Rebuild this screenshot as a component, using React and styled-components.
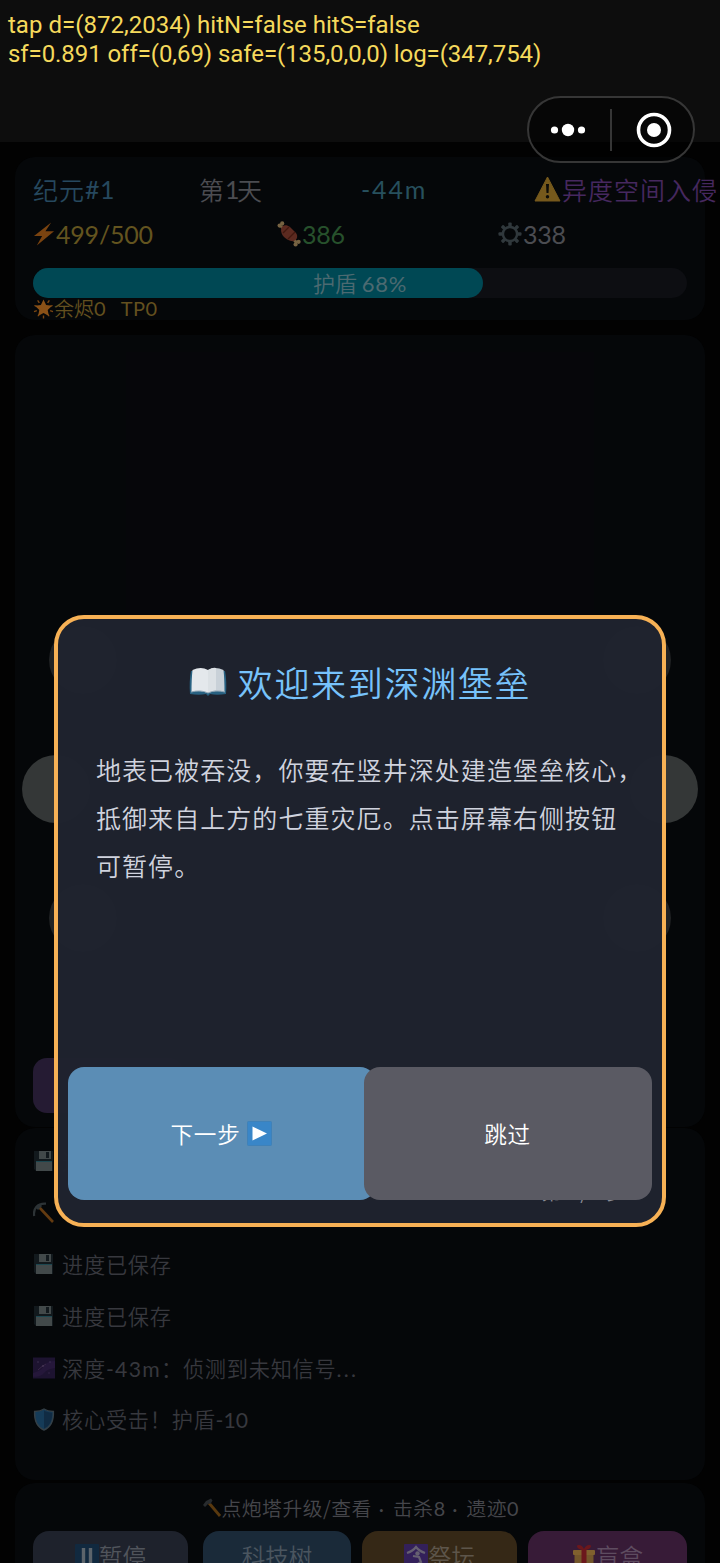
import React from "react";
import styled, { createGlobalStyle } from "styled-components";

const GlobalStyle = createGlobalStyle`
  * {
    box-sizing: border-box;
  }
  body {
    margin: 0;
    background: #020202;
    font-family: "Noto Sans CJK SC", sans-serif;
    font-weight: 350;
  }
`;

const Screen = styled.div`
  position: relative;
  display: flex;
  flex-direction: column;
  width: 720px;
  height: 1563px;
  overflow: hidden;
  background: #020202;
`;

const TopBar = styled.header`
  flex: none;
  height: 142px;
  padding: 11px 8px;
  background: #0d0d0d;
`;

const DebugLine = styled.div`
  height: 29px;
  line-height: 29px;
  font-family: Roboto, sans-serif;
  font-size: 24px;
  font-weight: 400;
  letter-spacing: ${(p) => p.$spacing};
  white-space: nowrap;
  color: #f5d95c;
`;

const Capsule = styled.div`
  position: absolute;
  top: 96px;
  left: 527px;
  z-index: 3;
  display: flex;
  align-items: center;
  width: 168px;
  height: 67px;
  border: 2px solid #363636;
  border-radius: 34px;
  background: rgba(0, 0, 0, 0.5);
`;

const CapsuleHalf = styled.div`
  display: flex;
  justify-content: center;
  width: 81px;
  padding: ${(p) => p.$pad || "0"};
`;

const CapsuleDivider = styled.div`
  width: 2px;
  height: 42px;
  background: #363636;
`;

const Panel = styled.section`
  flex: none;
  margin: 0 15px;
  height: ${(p) => p.$height};
  border-radius: 20px;
  background: #050709;
`;

const StatusPanel = styled(Panel)`
  margin-top: 15px;
  padding: 13px 18px 0;
`;

const StatRow = styled.div`
  display: grid;
  grid-template-columns: ${(p) => p.$columns};
  align-items: center;
  height: ${(p) => p.$height};
`;

const Stat = styled.div`
  display: flex;
  align-items: center;
  font-size: 25px;
  line-height: 36px;
  letter-spacing: 1px;
  white-space: nowrap;
  color: ${(p) => p.$color};

  svg {
    flex: none;
    margin-right: 1px;
  }
`;

const Num = styled.span`
  font-family: Lato, sans-serif;
  font-weight: 400;
  letter-spacing: ${(p) => p.$spacing || "0"};
`;

const ShieldTrack = styled.div`
  display: grid;
  margin-top: 7px;
  height: 30px;
  border-radius: 15px;
  background: #0d0e12;
`;

const ShieldFill = styled.div`
  grid-area: 1 / 1;
  border-radius: 15px;
  background: #004854;
`;

const ShieldLabel = styled.div`
  grid-area: 1 / 1;
  text-align: center;
  font-size: 22px;
  line-height: 28px;
  color: #4c6a71;
`;

const Embers = styled.div`
  display: flex;
  align-items: center;
  height: 21px;
  font-size: 20px;
  line-height: 21px;
  white-space: pre;
  color: #63501f;
`;

const StagePanel = styled(Panel)`
  display: flex;
  flex-direction: column;
  margin-top: 15px;
  padding-top: 17px;
`;

const Arena = styled.div`
  display: flex;
  height: 706px;
`;

const Field = styled.div`
  width: 468px;
  background: #06060a;
`;

const PadColumn = styled.div`
  display: flex;
  flex-direction: column;
  align-items: ${(p) => (p.$right ? "flex-end" : "flex-start")};
  gap: 61px;
  width: 111px;
  padding: 274px 0 0;
`;

const Pad = styled.div`
  width: 68px;
  height: 68px;
  margin: 0 ${(p) => (p.$strong ? "7px" : "34px")};
  border-radius: 50%;
  background: ${(p) => (p.$strong ? "#343737" : "#202224")};
`;

const PurpleButton = styled.div`
  width: 150px;
  height: 55px;
  margin-left: 18px;
  border-radius: 14px;
  background: #251b33;
`;

const LogPanel = styled(Panel)`
  margin-top: 1px;
  padding: 7px 18px;
`;

const LogRow = styled.div`
  display: flex;
  align-items: center;
  gap: 7px;
  height: 51.8px;
  font-size: 21.2px;
  letter-spacing: 0.75px;
  white-space: nowrap;
  color: #37383e;

  span {
    line-height: 30px;
  }
`;

const FooterPanel = styled(Panel)`
  margin-top: 3px;
  padding-top: 8px;
`;

const Hint = styled.div`
  display: flex;
  justify-content: center;
  align-items: center;
  height: 33px;
  font-size: 19.8px;
  letter-spacing: 0.5px;
  white-space: pre;
  color: #45464b;
`;

const ActionBar = styled.div`
  display: flex;
  margin-top: 7px;
  padding: 0 18px;
`;

const ActionButton = styled.div`
  display: flex;
  justify-content: center;
  align-items: center;
  width: ${(p) => p.$width};
  height: 50px;
  margin-right: ${(p) => p.$gap || "0"};
  border-radius: 16px;
  font-size: 23.5px;
  line-height: 30px;
  color: ${(p) => p.$color || "#50545b"};
  background: ${(p) => p.$bg};
`;

const Modal = styled.div`
  position: absolute;
  top: 615px;
  left: 54px;
  z-index: 2;
  display: flex;
  flex-direction: column;
  width: 612px;
  height: 612px;
  border: 4px solid #f7b155;
  border-radius: 30px;
  background: rgba(31, 35, 46, 0.97);
`;

const ModalTitle = styled.h1`
  display: flex;
  justify-content: center;
  align-items: center;
  gap: 11px;
  margin: 36px 0 0;
  height: 52px;
  font-size: 35px;
  font-weight: 350;
  letter-spacing: 1.7px;
  color: #77c2fb;

  svg {
    position: relative;
    top: 1px;
  }
`;

const ModalBody = styled.p`
  flex: 1;
  margin: 38px 10px 0 38px;
  font-size: 25px;
  font-weight: 350;
  letter-spacing: 1.06px;
  line-height: 48px;
  white-space: pre-line;
  color: #d0d3de;
`;

// sits under the buttons, only its lower edge shows
const StepLabel = styled.div`
  height: 0;
  margin-right: 34px;
  text-align: right;
  font-size: 21px;
  letter-spacing: 0.6px;
  line-height: 32px;
  color: #8a8c95;

  span {
    display: inline-block;
    transform: translateY(107px);
  }
`;

const ModalActions = styled.div`
  position: relative;
  display: flex;
  margin: 0 10px 23px;
`;

const ModalButton = styled.button`
  display: flex;
  justify-content: center;
  align-items: center;
  gap: 7px;
  width: ${(p) => p.$width};
  height: 133px;
  margin: 0 0 0 ${(p) => p.$overlap || "0"};
  padding: 0 1px 1px 0;
  border: 0;
  border-radius: 16px;
  font-family: inherit;
  font-size: 22.6px;
  font-weight: 350;
  letter-spacing: 0.7px;
  color: #fff;
  background: ${(p) => p.$bg};
`;

const Bolt = () => (
  <svg width="22" height="26" viewBox="0 0 23 26">
    <path d="M19 1 L1 15 L9.5 15 L4 25 L22 10 L13 10 Z" fill="#7a4310" />
  </svg>
);

const Meat = () => (
  <svg width="24" height="26" viewBox="0 0 24 26">
    <path d="M4 5 L20 22" stroke="#776342" strokeWidth="3" />
    <circle cx="2.6" cy="4.6" r="2.1" fill="#776342" />
    <circle cx="5.2" cy="2.4" r="2.1" fill="#776342" />
    <circle cx="18.6" cy="23.4" r="2.1" fill="#776342" />
    <circle cx="21.6" cy="20.8" r="2.1" fill="#776342" />
    <path
      d="M4 9 C4 4 9 3 13 6 L19 12 C22 16 19 21 14 20 C8 18 4 14 4 9 Z"
      fill="#5c2a20"
    />
    <path d="M6 12 L12 6 M11 18 L18 11" stroke="#41180f" strokeWidth="1.3" />
  </svg>
);

const Gear = () => (
  <svg width="24" height="24" viewBox="-12.5 -12.5 25 25">
    <circle r="7.4" fill="none" stroke="#30383c" strokeWidth="2.6" />
    {[0, 45, 90, 135, 180, 225, 270, 315].map((a) => (
      <rect
        key={a}
        x="-1.8"
        y="-12"
        width="3.6"
        height="4.5"
        rx="1"
        fill="#30383c"
        transform={`rotate(${a})`}
      />
    ))}
  </svg>
);

const Warning = () => (
  <svg width="27" height="26" viewBox="0 0 27 26">
    <path d="M13.5 1 L26 25 H1 Z" fill="#76591c" stroke="#76591c" />
    <path d="M12 8 H15 L14.5 17 H12.5 Z" fill="#0c0b08" />
    <circle cx="13.5" cy="20.7" r="1.7" fill="#0c0b08" />
  </svg>
);

const GlowStar = () => (
  <svg width="21" height="21" viewBox="-10.5 -10.5 21 21">
    {[0, 72, 144, 216, 288].map((a) => (
      <path
        key={a}
        d="M0 7 V10"
        stroke="#7c4713"
        strokeWidth="1.4"
        transform={`rotate(${a})`}
      />
    ))}
    {[36, 108, 252, 324].map((a) => (
      <path
        key={a}
        d="M0 7 V9.6"
        stroke="#7c4713"
        strokeWidth="1.2"
        transform={`rotate(${a})`}
      />
    ))}
    <path
      d="M0 -9 L2.6 -3.4 L8.6 -2.8 L4.2 1.4 L5.4 7.4 L0 4.4 L-5.4 7.4 L-4.2 1.4 L-8.6 -2.8 L-2.6 -3.4 Z"
      fill="#8a5117"
    />
  </svg>
);

const Floppy = () => (
  <svg width="22" height="22" viewBox="0 0 22 22">
    <path d="M1 1 H20 V21 H3 L1 19 Z" fill="#12191d" />
    <rect x="6" y="1" width="12" height="8" fill="#42494a" />
    <rect x="13" y="2" width="3" height="6" fill="#12191d" />
    <rect x="3" y="11" width="16" height="10" fill="#42494a" />
    <path d="M3 11.5 H19" stroke="#1c4750" />
  </svg>
);

const Pickaxe = () => (
  <svg width="22" height="22" viewBox="0 0 22 22">
    <path d="M6 5 L20 20" stroke="#643b11" strokeWidth="2.6" />
    <path
      d="M1.2 14 C0 7 4 1 13 1.6"
      fill="none"
      stroke="#2d3336"
      strokeWidth="2.2"
    />
    <path d="M4 7 L8 3" stroke="#2d3336" strokeWidth="3" />
  </svg>
);

const Galaxy = () => (
  <svg width="22" height="22" viewBox="0 0 22 22">
    <rect y="0.5" width="22" height="21" fill="#1d1330" />
    <path d="M0 16 Q8 14 11 9 T22 4 V11 Q14 12 11 16 T0 20 Z" fill="#25173a" />
    <path d="M5 13 Q9 9 13 7" stroke="#392648" fill="none" />
    <circle cx="5" cy="5" r="0.7" fill="#47385a" />
    <circle cx="10" cy="9" r="0.8" fill="#544563" />
    <circle cx="17" cy="5" r="0.7" fill="#47385a" />
    <circle cx="16" cy="16" r="0.7" fill="#3a2b4e" />
  </svg>
);

const ShieldIcon = () => (
  <svg width="22" height="23" viewBox="0 0 22 23">
    <path
      d="M11 1 C8 3 4 3.4 1.6 3.5 C1.2 13 4 19 11 22 C18 19 20.8 13 20.4 3.5 C18 3.4 14 3 11 1 Z"
      fill="#153b58"
      stroke="#343f46"
      strokeWidth="1.4"
    />
    <path
      d="M11 2.5 V20.5 C16.5 18 19.4 13 19.2 4.7 C16 4.5 13.5 4 11 2.5 Z"
      fill="#102b43"
    />
  </svg>
);

const Hammer = () => (
  <svg width="20" height="21" viewBox="0 0 20 21">
    <path d="M7 6 L18 19" stroke="#59390f" strokeWidth="2.8" />
    <path d="M1 8 L4 4 L9 1.5 L10.5 3.5 L8.5 7 L6.5 6.5 L3 10 Z" fill="#282b2e" />
  </svg>
);

const PauseIcon = () => (
  <svg width="24" height="24" viewBox="0 0 24 24">
    <rect width="24" height="24" rx="1" fill="#11293f" />
    <path d="M8.5 4 V20 M15.5 4 V20" stroke="#5c646b" strokeWidth="3.4" />
  </svg>
);

const Shrine = () => (
  <svg width="24" height="24" viewBox="0 0 24 24">
    <rect width="24" height="24" rx="1" fill="#33205a" />
    <g fill="none" stroke="#666071" strokeWidth="2.2">
      <path d="M3 9 Q9 7 12 3 Q15 7 21 9" />
      <path d="M9 12 L15 13 L17 18 L12 21" />
    </g>
    <circle cx="13.5" cy="9.5" r="2.2" fill="#666071" />
  </svg>
);

const Gift = () => (
  <svg width="24" height="24" viewBox="0 0 24 24">
    <rect x="1" y="6" width="22" height="5" rx="1" fill="#80602e" />
    <rect x="2.5" y="11" width="19" height="13" fill="#73562b" />
    <rect x="9.5" y="5" width="5" height="19" fill="#6c171c" />
    <path
      d="M12 6 C5 6 3 0.5 7 1 Q10 1 12 5 Q14 1 17 1 C21 0.5 19 6 12 6 Z"
      fill="#6c171c"
    />
  </svg>
);

const Book = () => (
  <svg width="38" height="30" viewBox="0 0 38 30">
    <path
      d="M2 4 H36 Q38 14 37 27 Q28 28.5 21 27 L19 29 L17 27 Q10 28.5 1 27 Q0 14 2 4 Z"
      fill="#286181"
    />
    <path d="M3.5 3 Q12 -1 19 3 V26 Q11 22.5 2.5 25 Q2.5 12 3.5 3 Z" fill="#e4e8ec" />
    <path d="M34.5 3 Q26 -1 19 3 V26 Q27 22.5 35.5 25 Q35.5 12 34.5 3 Z" fill="#c9d1d8" />
    <path d="M19 3 Q24 0 27 1 V23 Q22 24 19 26 Z" fill="#dce1e5" />
    <path d="M2 25 Q12 22.5 19 26 Q26 22.5 36 25" fill="none" stroke="#8fa5b4" />
  </svg>
);

const PlayIcon = () => (
  <svg width="25" height="25" viewBox="0 0 25 25">
    <rect x="0.5" y="0.5" width="24" height="24" rx="1" fill="#3986c8" stroke="#3f81b8" />
    <path d="M5.5 5.5 L20 12.5 L5.5 19.5 Z" fill="#fff" />
  </svg>
);

const logs = [
  { icon: <Floppy />, text: "进度已保存" },
  { icon: <Pickaxe />, text: "" },
  { icon: <Floppy />, text: "进度已保存" },
  { icon: <Floppy />, text: "进度已保存" },
  {
    icon: <Galaxy />,
    text: (
      <>
        深度<Num $spacing="1.3px">-43m</Num>：侦测到未知信号
        <Num $spacing="2.3px">...</Num>
      </>
    ),
  },
  {
    icon: <ShieldIcon />,
    text: (
      <>
        核心受击！护盾<Num>-10</Num>
      </>
    ),
  },
];

function Pads({ right }) {
  return (
    <PadColumn $right={right}>
      <Pad />
      <Pad $strong />
      <Pad />
    </PadColumn>
  );
}

export default function App() {
  return (
    <Screen>
      <GlobalStyle />
      <TopBar>
        <DebugLine $spacing="0.02px">
          tap d=(872,2034) hitN=false hitS=false
        </DebugLine>
        <DebugLine $spacing="-0.07px">
          sf=0.891 off=(0,69) safe=(135,0,0,0) log=(347,754)
        </DebugLine>
      </TopBar>

      <Capsule>
        <CapsuleHalf $pad="0 3px 0 0">
          <svg width="36" height="14" viewBox="0 0 36 14">
            <g fill="#fff">
              <circle cx="4.5" cy="7" r="3.6" />
              <circle cx="18" cy="7" r="6.2" />
              <circle cx="31.5" cy="7" r="3.6" />
            </g>
          </svg>
        </CapsuleHalf>
        <CapsuleDivider />
        <CapsuleHalf $pad="0 0 0 2px">
          <svg width="36" height="36" viewBox="0 0 36 36">
            <circle cx="18" cy="18" r="15.5" fill="none" stroke="#fff" strokeWidth="3.6" />
            <circle cx="18" cy="18" r="7" fill="#fff" />
          </svg>
        </CapsuleHalf>
      </Capsule>

      <StatusPanel $height="163px">
        <StatRow $columns="166px 162px 173px 1fr" $height="38px">
          <Stat $color="#26485e">
            纪元<Num $spacing="0.5px">#1</Num>
          </Stat>
          <Stat $color="#4b4c51">
            第<Num $spacing="-2.5px">1</Num>天
          </Stat>
          <Stat $color="#27505d">
            <Num $spacing="1.8px">-44m</Num>
          </Stat>
          <Stat $color="#46285f">
            <Warning />
            异度空间入侵
          </Stat>
        </StatRow>
        <StatRow $columns="244px 221px 1fr" $height="52px">
          <Stat $color="#63541f">
            <Bolt />
            <Num $spacing="-0.2px">499/500</Num>
          </Stat>
          <Stat $color="#27512c">
            <Meat />
            <Num $spacing="-0.3px">386</Num>
          </Stat>
          <Stat $color="#4b4c51">
            <Gear />
            <Num $spacing="-0.3px">338</Num>
          </Stat>
        </StatRow>
        <ShieldTrack style={{ marginTop: 8 }}>
          <ShieldFill style={{ width: "68.8%" }} />
          <ShieldLabel>
            护盾 <Num $spacing="0.7px">68%</Num>
          </ShieldLabel>
        </ShieldTrack>
        <Embers>
          <GlowStar />
          余烬<Num>{"0  "}</Num>
          <Num $spacing="0.4px"> TP0</Num>
        </Embers>
      </StatusPanel>

      <StagePanel $height="792px">
        <Arena>
          <Pads />
          <Field />
          <Pads right />
        </Arena>
        <PurpleButton />
      </StagePanel>

      <LogPanel $height="352px">
        {logs.map((log, i) => (
          <LogRow key={i}>
            {log.icon}
            <span>{log.text}</span>
          </LogRow>
        ))}
      </LogPanel>

      <FooterPanel $height="120px">
        <Hint>
          <Hammer />
          点炮塔升级/查看<Num $spacing="2px"> · </Num>击杀
          <Num>8</Num>
          <Num $spacing="2px"> · </Num>遗迹<Num>0</Num>
        </Hint>
        <ActionBar>
          <ActionButton $width="155px" $gap="15px" $bg="#1e222c">
            <PauseIcon />
            暂停
          </ActionButton>
          <ActionButton $width="148px" $gap="11px" $bg="#1a2a39" $color="#4a555f">
            科技树
          </ActionButton>
          <ActionButton $width="155px" $gap="11px" $bg="#352816" $color="#5d554a">
            <Shrine />
            祭坛
          </ActionButton>
          <ActionButton $width="159px" $bg="#371b37" $color="#5e4c60">
            <Gift />
            盲盒
          </ActionButton>
        </ActionBar>
      </FooterPanel>

      <Modal>
        <ModalTitle>
          <Book />
          欢迎来到深渊堡垒
        </ModalTitle>
        <ModalBody>
          地表已被吞没，你要在竖井深处建造堡垒核心，{"\n"}
          抵御来自上方的七重灾厄。点击屏幕右侧按钮{"\n"}
          可暂停。
        </ModalBody>
        <StepLabel>
          <span>第 1/6 步</span>
        </StepLabel>
        <ModalActions>
          <ModalButton $width="308px" $bg="#5b8db5">
            下一步
            <PlayIcon />
          </ModalButton>
          <ModalButton $width="288px" $overlap="-12px" $bg="#5a5a63">
            跳过
          </ModalButton>
        </ModalActions>
      </Modal>
    </Screen>
  );
}
